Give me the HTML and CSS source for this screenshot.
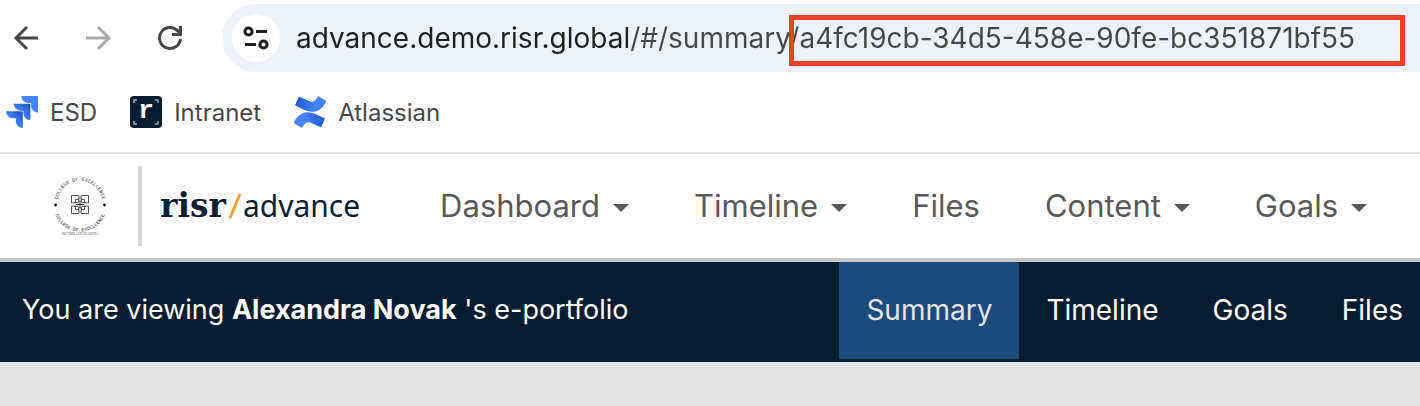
FILE: index.html
```html
<!DOCTYPE html>
<html lang="en">
<head>
    <meta charset="UTF-8">
    <meta name="viewport" content="width=device-width, initial-scale=1.0">
    <title>risr/advance - Summary</title>
    <link rel="stylesheet" href="styles.css">
</head>
<body>
    <!-- Browser toolbar -->
    <div class="toolbar">
        <div class="nav-buttons">
            <button class="icon-button" aria-label="Back">
                <svg width="28" height="28" viewBox="0 0 28 28"><path d="M15 3 4 14l11 11M4 14h22" /></svg>
            </button>
            <button class="icon-button" aria-label="Forward" disabled>
                <svg width="28" height="28" viewBox="0 0 28 28"><path d="m14 3 11 11-11 11M25 14H2" /></svg>
            </button>
            <button class="icon-button" aria-label="Reload">
                <svg width="28" height="28" viewBox="0 0 28 28"><path d="M24.500 15A10.500 10.500 0 1 1 21.500 6.600L24 9.500M24.500 2v8.500H16" /></svg>
            </button>
        </div>
        <div class="address-bar">
            <button class="site-info" aria-label="View site information">
                <svg width="28" height="28" viewBox="0 0 28 28">
                    <circle cx="6.500" cy="7.500" r="3.600" /><path d="M14 7.500h11" />
                    <circle cx="21.500" cy="20.500" r="3.600" /><path d="M3 20.500h11" />
                </svg>
            </button>
            <input class="address" type="text" aria-label="Address" spellcheck="false" value="advance.demo.risr.global/#/summary/a4fc19cb-34d5-458e-90fe-bc351871bf55">
            <div class="highlight"></div>
        </div>
    </div>

    <!-- Bookmarks -->
    <div class="bookmarks">
        <a class="bookmark" href="#">
            <svg width="32" height="32" viewBox="0 0 24 24">
                <defs>
                    <linearGradient id="jira" x1="1" y1="0" x2="0.400" y2="0.600">
                        <stop offset="0.200" stop-color="#2459c9" /><stop offset="1" stop-color="#4384fb" />
                    </linearGradient>
                </defs>
                <path fill="url(#jira)" d="M11.571 11.513H0a5.218 5.218 0 0 0 5.232 5.215h2.130v2.057A5.215 5.215 0 0 0 12.575 24V12.518a1.005 1.005 0 0 0-1.005-1.005z" />
                <path fill="url(#jira)" d="M17.294 5.757H5.736a5.215 5.215 0 0 0 5.215 5.214h2.129v2.058a5.218 5.218 0 0 0 5.215 5.214V6.758a1.001 1.001 0 0 0-1.001-1.001z" />
                <path fill="#4384fb" d="M23.013 0H11.455a5.215 5.215 0 0 0 5.215 5.215h2.129v2.057A5.215 5.215 0 0 0 24 12.483V1.005A1.001 1.001 0 0 0 23.013 0z" />
            </svg>
            <span>ESD</span>
        </a>
        <a class="bookmark" href="#">
            <svg width="32" height="32" viewBox="0 0 32 32">
                <rect width="32" height="32" rx="4" fill="#081d31" />
                <path d="M4 7V4h3M25 4h3v3M28 25v3h-3M7 28H4v-3" fill="none" stroke="#6fb9b5" stroke-width="1.500" />
                <text class="favicon-letter" x="16" y="22" text-anchor="middle">r</text>
            </svg>
            <span>Intranet</span>
        </a>
        <a class="bookmark" href="#">
            <svg width="32" height="32" viewBox="0 0 24 24">
                <defs>
                    <linearGradient id="confluence-top" x1="0" y1="0" x2="1" y2="0">
                        <stop offset="0" stop-color="#2459c9" /><stop offset="0.700" stop-color="#4384fb" />
                    </linearGradient>
                    <linearGradient id="confluence-bottom" x1="1" y1="0" x2="0" y2="0">
                        <stop offset="0" stop-color="#2459c9" /><stop offset="0.700" stop-color="#4384fb" />
                    </linearGradient>
                </defs>
                <path fill="url(#confluence-bottom)" d="M.87 18.257c-.248.382-.53.875-.763 1.245a.764.764 0 0 0 .255 1.040l4.965 3.054a.764.764 0 0 0 1.058-.26c.199-.332.454-.763.733-1.221 1.967-3.247 3.945-2.853 7.508-1.146l4.957 2.337a.764.764 0 0 0 1.028-.382l2.364-5.346a.764.764 0 0 0-.382-1 599.851 599.851 0 0 1-4.965-2.361C10.911 10.970 5.224 11.185.87 18.257z" />
                <path fill="url(#confluence-top)" d="M23.131 5.743c.249-.405.531-.875.764-1.250a.764.764 0 0 0-.256-1.034L18.675.404a.764.764 0 0 0-1.058.26c-.195.335-.451.763-.734 1.225-1.966 3.246-3.945 2.850-7.508 1.146L4.437.694a.764.764 0 0 0-1.027.382L1.046 6.422a.764.764 0 0 0 .382 1c1.039.49 3.105 1.467 4.965 2.361 6.698 3.246 12.392 3.029 16.738-4.040z" />
            </svg>
            <span>Atlassian</span>
        </a>
    </div>

    <!-- Site header -->
    <header class="header">
        <svg class="college-logo" width="60" height="64" viewBox="0 0 60 64" role="img" aria-label="College of Excellence">
            <defs>
                <path id="arc-top" d="M8 34A22.500 22.500 0 1 1 52 34" />
                <path id="arc-bottom" d="M3.700 27A26.600 26.600 0 1 0 56.300 27" />
            </defs>
            <text class="seal-text"><textPath href="#arc-top" startOffset="50%" text-anchor="middle">COLLEGE OF EXCELLENCE</textPath></text>
            <text class="seal-text"><textPath href="#arc-bottom" startOffset="50%" text-anchor="middle">COLLEGE OF EXCELLENCE</textPath></text>
            <circle cx="5.500" cy="31" r="1.400" />
            <circle cx="54.500" cy="31" r="1.400" />
            <g fill="none" stroke="#555" stroke-width="1">
                <path d="M21.500 21.500h7.500v4h-3.500v3.500h-4zM38.500 21.500h-7.500v4h3.500v3.500h4zM21.500 39.500h7.500v-4h-3.500v-3.500h-4zM38.500 39.500h-7.500v-4h3.500v-3.500h4z" />
                <path d="M24 28.500h4.500V24M36 28.500h-4.500V24M24 32.500h4.500V37M36 32.500h-4.500V37" />
                <path d="M30 26.500v8M26 30.500h8" stroke="#111" />
            </g>
            <text class="seal-motto" x="30" y="61" text-anchor="middle">DOCTRINA EXCELLENTIA</text>
        </svg>
        <a class="brand" href="#"><b>risr</b><svg width="17" height="28" viewBox="0 0 17 28"><path d="M14 2 4 26" stroke="#e8a33a" stroke-width="3" /></svg>advance</a>
        <nav class="main-nav">
            <button class="menu">Dashboard <span class="caret"></span></button>
            <button class="menu">Timeline <span class="caret"></span></button>
            <a class="menu" href="#">Files</a>
            <button class="menu">Content <span class="caret"></span></button>
            <button class="menu">Goals <span class="caret"></span></button>
        </nav>
    </header>

    <!-- Portfolio bar -->
    <div class="portfolio-bar">
        <p class="viewing">You are viewing <b>Alexandra Novak</b> 's e-portfolio</p>
        <nav class="tabs">
            <a class="tab active" href="#">Summary</a>
            <a class="tab" href="#">Timeline</a>
            <a class="tab" href="#">Goals</a>
            <a class="tab" href="#">Files</a>
        </nav>
    </div>
</body>
</html>
```
FILE: styles.css
```css
* {
    box-sizing: border-box;
}
body {
    font-family: Inter, sans-serif;
    margin: 0;
    background-color: #e4e4e4;
    overflow-x: hidden;
}
button {
    font-family: inherit;
    padding: 0;
    border: none;
    background: none;
    cursor: pointer;
}
a {
    color: inherit;
    text-decoration: none;
}
svg {
    display: block;
    flex-shrink: 0;
}

/* Browser toolbar */
.toolbar {
    display: flex;
    align-items: center;
    padding: 4px 0 4px 12px;
    background-color: white;
}
.nav-buttons {
    display: flex;
    gap: 44px;
    margin-right: 38px;
}
.icon-button {
    color: #474747;
}
.icon-button:disabled {
    color: #a9a9a9;
}
.icon-button path {
    fill: none;
    stroke: currentColor;
    stroke-width: 3;
}
.address-bar {
    position: relative;
    display: flex;
    flex: 1;
    align-items: center;
    gap: 16px;
    height: 68px;
    padding-left: 10px;
    background-color: #edf2fa;
    border-radius: 34px 0 0 34px;
}
.site-info {
    display: flex;
    align-items: center;
    justify-content: center;
    flex-shrink: 0;
    width: 48px;
    height: 48px;
    border-radius: 50%;
    background-color: white;
}
.site-info svg {
    fill: none;
    stroke: #1f1f1f;
    stroke-width: 3;
}
/* Host is darker than the path */
.address {
    flex: 1;
    min-width: 0;
    padding: 0;
    border: none;
    outline: none;
    font-family: Inter, sans-serif;
    font-size: 28px;
    color: transparent;
    background: linear-gradient(to right, #1f1f1f 333px, #474747 333px);
    -webkit-background-clip: text;
    background-clip: text;
}
.highlight {
    position: absolute;
    top: 11px;
    left: 567px;
    right: 15px;
    height: 51px;
    border: 5px solid #ea4025;
    pointer-events: none;
}

/* Bookmarks */
.bookmarks {
    display: flex;
    gap: 33px;
    padding: 16px 6px 20px;
    background-color: white;
    border-bottom: 2px solid #e0e0e0;
}
.bookmark {
    display: flex;
    align-items: center;
    gap: 12px;
    height: 40px;
    font-size: 24px;
    color: #474747;
}
.favicon-letter {
    font: bold 26px "Liberation Mono", monospace;
    fill: white;
}

/* Site header */
.header {
    display: flex;
    align-items: center;
    height: 108px;
    padding-left: 50px;
    background-color: white;
    border-bottom: 4px solid #c8c8c8;
}
.seal-text {
    font: 5px "Liberation Mono", monospace;
    fill: #333;
}
.seal-motto {
    font: 3px "Liberation Serif", serif;
    fill: #555;
}
.brand {
    display: flex;
    align-items: center;
    height: 80px;
    margin: 0 80px 0 28px;
    padding-left: 18px;
    border-left: 4px solid #d8d8d8;
    font-family: "Noto Sans", sans-serif;
    font-size: 30px;
    line-height: 40px;
    color: #0b2136;
}
.brand b {
    font-family: "DejaVu Serif", serif;
    font-size: 33px;
}
.main-nav {
    display: flex;
    gap: 65px;
}
.menu {
    display: flex;
    align-items: center;
    gap: 13px;
    font-size: 31px;
    line-height: 40px;
    color: #595959;
}
.caret {
    margin-top: 4px;
    border: 8px solid transparent;
    border-top-color: currentColor;
    border-bottom: none;
}

/* Portfolio bar */
.portfolio-bar {
    display: flex;
    justify-content: space-between;
    height: 100px;
    padding: 0 0 3px 22px;
    background-color: #081d31;
    color: white;
    font-size: 27px;
    line-height: 96px;
    white-space: nowrap;
}
.viewing {
    margin: 0;
}
.tabs {
    display: flex;
    font-size: 28px;
}
.tab {
    padding: 0 27px;
}
.tab:last-child {
    padding-right: 17px;
}
.active {
    background-color: #1c4a7c;
    color: #e4e4e4;
}
```
